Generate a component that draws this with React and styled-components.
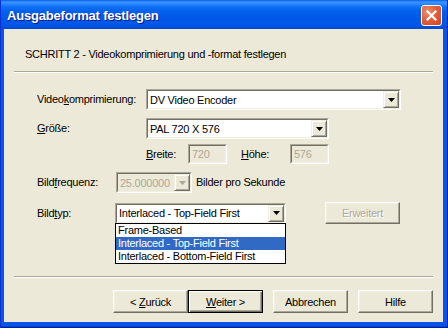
import React from "react";
import styled, { createGlobalStyle, css } from "styled-components";

const GlobalStyle = createGlobalStyle`
  html, body { margin: 0; padding: 0; }
  body {
    background: #ECE9D8;
    font-family: "Liberation Sans", Arial, sans-serif;
    font-size: 11px;
    letter-spacing: -0.25px;
    color: #000;
  }
  * { box-sizing: border-box; }
`;

const Window = styled.div`
  width: 448px;
  height: 328px;
  display: flex;
  flex-direction: column;
  background: #0054E3;
`;

const TitleBar = styled.div`
  height: 29px;
  flex: none;
  display: flex;
  align-items: center;
  justify-content: space-between;
  padding: 1px 6px 0 7px;
  background: linear-gradient(
    to bottom,
    #0A5AE8 0px,
    #3B94FF 2px,
    #2A88FF 4px,
    #0F70F6 7px,
    #0362EE 11px,
    #0057E6 18px,
    #0058E9 24px,
    #0052DF 27px,
    #0047D0 29px
  );
  box-shadow: inset 1px 0 #0831D9, inset -1px 0 #001EA0;
`;

const Title = styled.div`
  color: #fff;
  font-family: "Liberation Sans", Arial, sans-serif;
  font-weight: bold;
  font-size: 13px;
  letter-spacing: -0.2px;
  text-shadow: 1px 1px #0A1883;
`;

const CloseButton = styled.div`
  width: 21px;
  height: 21px;
  border: 1px solid #fff;
  border-radius: 3px;
  background: radial-gradient(circle at 30% 30%, #EE8E6C 0%, #E2603E 45%, #CC4420 100%);
  display: flex;
  align-items: center;
  justify-content: center;
`;

const Frame = styled.div`
  flex: 1;
  display: flex;
  padding: 0 5px 6px 4px;
  background: #0A55E6;
  box-shadow: inset 1px 0 #0831D9, inset -1px 0 #001EA0, inset 0 -1px #001EA0, inset 0 -2px #0343D8;
`;

const Body = styled.div`
  flex: 1;
  display: flex;
  flex-direction: column;
  background: #ECE9D8;
`;

const Header = styled.div`
  height: 42px;
  padding: 19px 0 0 21px;
  line-height: 13px;
`;

const Separator = styled.div`
  margin: 0 10px;
  height: 2px;
  border-top: 1px solid #ACA899;
  border-bottom: 1px solid #fff;
  flex: none;
`;

const Form = styled.div`
  flex: 1;
  display: flex;
  flex-direction: column;
  padding: 16px 0 0 33px;
`;

const Row = styled.div`
  display: flex;
  align-items: center;
  margin-top: ${(p) => p.$mt || 0}px;
  margin-left: ${(p) => p.$indent || 0}px;
`;

const Label = styled.div`
  width: ${(p) => p.$w}px;
  margin-left: ${(p) => p.$ml || 0}px;
  flex: none;
  line-height: 13px;
  white-space: nowrap;
`;

const Text = styled.div`
  margin-left: ${(p) => p.$ml || 0}px;
  line-height: 13px;
  white-space: nowrap;
`;

const Sunken = styled.div`
  position: relative;
  width: ${(p) => p.$w}px;
  height: ${(p) => p.$h || 21}px;
  flex: none;
  display: flex;
  border: 1px solid;
  border-color: #ACA899 #fff #fff #ACA899;
`;

const Field = styled.div`
  flex: 1;
  display: flex;
  min-width: 0;
  border: 1px solid;
  border-color: #716F64 #F1EFE2 #F1EFE2 #716F64;
  background: ${(p) => (p.$disabled ? "#ECE9D8" : "#fff")};
  color: ${(p) => (p.$disabled ? "#ACA899" : "#000")};
`;

const Value = styled.div`
  flex: 1;
  padding-left: 2px;
  display: flex;
  align-items: center;
  white-space: nowrap;
  overflow: hidden;
`;

const DropButton = styled.div`
  width: 16px;
  flex: none;
  display: flex;
  align-items: center;
  justify-content: center;
  background: #ECE9D8;
  border: 1px solid;
  border-color: #F1EFE2 #716F64 #716F64 #F1EFE2;
  box-shadow: inset 1px 1px #fff, inset -1px -1px #ACA899;
`;

const ListBox = styled.div`
  position: absolute;
  top: 100%;
  left: -1px;
  width: ${(p) => p.$w}px;
  background: #fff;
  border: 1px solid #000;
  z-index: 2;
`;

const ListItem = styled.div`
  height: 13px;
  line-height: 13px;
  padding-left: 2px;
  white-space: nowrap;
  ${(p) =>
    p.$selected &&
    css`
      background: #316AC5;
      color: #fff;
    `}
`;

const Button = styled.button`
  width: 75px;
  height: ${(p) => p.$h || 23}px;
  margin-left: ${(p) => p.$ml || 0}px;
  flex: none;
  padding: 0;
  font: inherit;
  letter-spacing: inherit;
  color: ${(p) => (p.disabled ? "#ACA899" : "#000")};
  text-shadow: ${(p) => (p.disabled ? "1px 1px #fff" : "none")};
  background: #ECE9D8;
  border: 1px solid;
  border-color: #fff #716F64 #716F64 #fff;
  box-shadow: inset -1px -1px #ACA899, inset 1px 1px #F1EFE2;
  ${(p) =>
    p.$default &&
    css`
      border-color: #000;
      box-shadow: inset 1px 1px #fff, inset -1px -1px #716F64, inset -2px -2px #ACA899;
    `}
`;

const ButtonRow = styled.div`
  display: flex;
  justify-content: flex-end;
  padding: 12px 10px 9px 0;
`;

const ButtonPair = styled.div`
  display: flex;
  margin-right: 10px;
`;

const Arrow = ({ disabled }) => (
  <svg width="7" height="4" viewBox="0 0 7 4">
    <polygon points="0,0 7,0 3.5,4" fill={disabled ? "#ACA899" : "#000"} />
  </svg>
);

const Combo = ({ w, value, disabled, children }) => (
  <Sunken $w={w}>
    <Field $disabled={disabled}>
      <Value>{value}</Value>
      <DropButton>
        <Arrow disabled={disabled} />
      </DropButton>
    </Field>
    {children}
  </Sunken>
);

const TextInput = ({ w, value }) => (
  <Sunken $w={w} $h={20}>
    <Field $disabled>
      <Value>{value}</Value>
    </Field>
  </Sunken>
);

export default function App() {
  return (
    <>
      <GlobalStyle />
      <Window>
        <TitleBar>
          <Title>Ausgabeformat festlegen</Title>
          <CloseButton>
            <svg width="11" height="11" viewBox="0 0 11 11">
              <path d="M1.5 1.5 L9.5 9.5 M9.5 1.5 L1.5 9.5" stroke="#fff" strokeWidth="2.2" strokeLinecap="square" />
            </svg>
          </CloseButton>
        </TitleBar>
        <Frame>
          <Body>
            <Header>SCHRITT 2 - Videokomprimierung und -format festlegen</Header>
            <Separator />
            <Form>
              <Row>
                <Label $w={109}>
                  Video<u>k</u>omprimierung:
                </Label>
                <Combo w={255} value="DV Video Encoder" />
              </Row>
              <Row $mt={8}>
                <Label $w={109}>
                  <u>G</u>röße:
                </Label>
                <Combo w={183} value="PAL 720 X 576" />
              </Row>
              <Row $mt={5} $indent={109}>
                <Label $w={42}>
                  <u>B</u>reite:
                </Label>
                <TextInput w={39} value="720" />
                <Label $w={49} $ml={14}>
                  <u>H</u>öhe:
                </Label>
                <TextInput w={39} value="576" />
              </Row>
              <Row $mt={8}>
                <Label $w={79}>
                  Bild<u>f</u>requenz:
                </Label>
                <Combo w={76} value="25.000000" disabled />
                <Text $ml={4}>Bilder pro Sekunde</Text>
              </Row>
              <Row $mt={9}>
                <Label $w={78}>
                  Bild<u>t</u>yp:
                </Label>
                <Combo w={171} value="Interlaced - Top-Field First">
                  <ListBox $w={171}>
                    <ListItem>Frame-Based</ListItem>
                    <ListItem $selected>Interlaced - Top-Field First</ListItem>
                    <ListItem>Interlaced - Bottom-Field First</ListItem>
                  </ListBox>
                </Combo>
                <Button disabled $ml={39} $h={22}>
                  Erweitert
                </Button>
              </Row>
            </Form>
            <Separator />
            <ButtonRow>
              <ButtonPair>
                <Button>
                  &lt; <u>Z</u>urück
                </Button>
                <Button $default>
                  <u>W</u>eiter &gt;
                </Button>
              </ButtonPair>
              <Button>Abbrechen</Button>
              <Button $ml={10}>Hilfe</Button>
            </ButtonRow>
          </Body>
        </Frame>
      </Window>
    </>
  );
}
